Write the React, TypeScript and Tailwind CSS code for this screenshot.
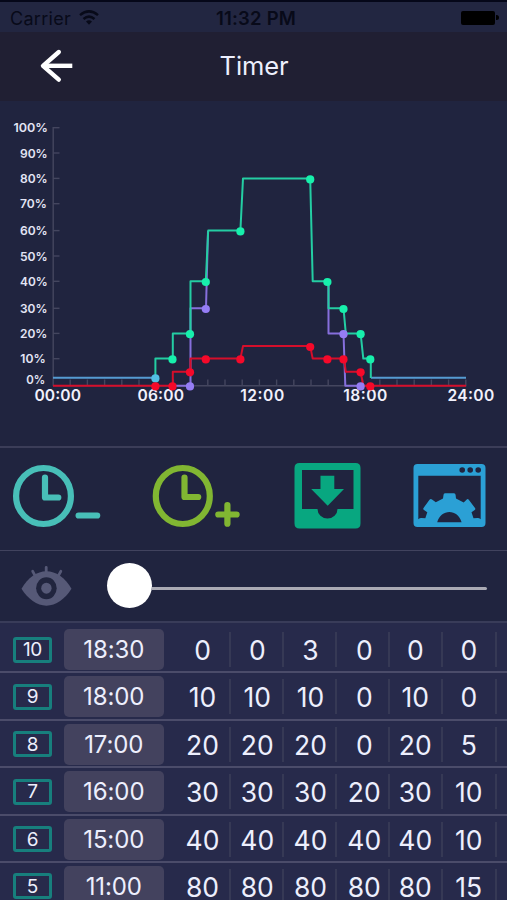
import React from "react";

const PERCENT_LABELS = [
  { text: "100%", x: 13.5, y: 127.7, width: 34.5 },
  { text: "90%", x: 20, y: 153, width: 27.7 },
  { text: "80%", x: 20, y: 178.4, width: 27.7 },
  { text: "70%", x: 20, y: 203.7, width: 26.8 },
  { text: "60%", x: 20, y: 230.6, width: 27.7 },
  { text: "50%", x: 20, y: 256, width: 27.7 },
  { text: "40%", x: 20, y: 281.3, width: 27.7 },
  { text: "30%", x: 20, y: 308.3, width: 27.4 },
  { text: "20%", x: 20, y: 333.4, width: 27.4 },
  { text: "10%", x: 20.3, y: 358.7, width: 25.4 },
  { text: "0%", x: 26.3, y: 379.3, width: 19 },
];

const HOURS = [
  { text: "00:00", x: 34.4 },
  { text: "06:00", x: 137.4 },
  { text: "12:00", x: 240.2 },
  { text: "18:00", x: 343.2 },
  { text: "24:00", x: 447.5 },
];

const GREEN_DOTS = [[172.5, 359.4], [190, 334.2], [205.8, 282], [240.4, 231.4], [310.2, 179.4], [327.4, 282], [343.5, 309], [360.6, 334.2], [370.3, 359.4]];
const PURPLE_DOTS = [[190, 386.4], [205.8, 309], [343.5, 334.2], [360.6, 386.4]];
const RED_DOTS = [[155.4, 386.4], [172.5, 386.4], [190, 372.3], [205.8, 359.4], [240.4, 359.4], [310.2, 347], [327.4, 359.4], [343.5, 359.4], [360.6, 372.3], [370.3, 386.4]];

const ROWS = [
  { id: 10, time: "18:30", values: [0, 0, 3, 0, 0, 0] },
  { id: 9, time: "18:00", values: [10, 10, 10, 0, 10, 0] },
  { id: 8, time: "17:00", values: [20, 20, 20, 0, 20, 5] },
  { id: 7, time: "16:00", values: [30, 30, 30, 20, 30, 10] },
  { id: 6, time: "15:00", values: [40, 40, 40, 40, 40, 10] },
  { id: 5, time: "11:00", values: [80, 80, 80, 80, 80, 15] },
];

function Dots({ points, color }: { points: number[][]; color: string }) {
  return (
    <g fill={color}>
      {points.map(([x, y]) => (
        <circle key={`${x}-${y}`} cx={x} cy={y} r="4.1" />
      ))}
    </g>
  );
}

function Chart() {
  return (
    <svg width="507" height="345" viewBox="0 101 507 345" className="block shrink-0">
      <g stroke="#44465f" strokeWidth="1.4">
        <path d="M53.2 127v259M53 385.8H466.500" />
        {PERCENT_LABELS.slice(0, 10).map((l) => (
          <path key={l.text} d={`M53 ${l.y}h6.500`} />
        ))}
        {Array.from({ length: 24 }, (_, i) => (
          <path key={i} d={`M${53 + (i + 1) * 17.2} 379.500v6`} />
        ))}
      </g>
      <g fill="#e3e4f5" fontSize="12.4" fontWeight="600">
        {PERCENT_LABELS.map((l) => (
          <text key={l.text} x={l.x} y={l.y + 4.5} textLength={l.width} lengthAdjust="spacingAndGlyphs">
            {l.text}
          </text>
        ))}
      </g>
      <g fill="#f1f1fc" fontSize="15.6" fontWeight="600">
        {HOURS.map((h) => (
          <text key={h.text} x={h.x} y="401" textLength={h.text[0] === "1" ? 44 : 46.7}>
            {h.text}
          </text>
        ))}
      </g>
      <g fill="none" strokeWidth="2" strokeLinejoin="round">
        <path stroke="#866fdc" d="M172.500 385.700H190.500V308.300H206L208 231M328.500 282V333.500H343.500L345.300 385.700H360.600" />
        <path stroke="#559bd2" d="M53 377.800H155.400M371 377.800H466" />
        <path stroke="#24cda3" d="M155.400 378V358.600H172.800V333.400H190.500V281.300H205.800L208.200 230.600H240.400L243 178.400H310.200L312.700 281.300H328.500V308.300H343.500L345.800 333.400H360.600L363.300 358.600H370.800V378" />
        <path stroke="#d50e2b" d="M53 385.800H172.800V371.800H190.500V358.600H240.400L243 346.100H310.200L312.700 358.600H344L345.800 371.800H360.600L363.300 385.800H466" />
      </g>
      <Dots points={PURPLE_DOTS} color="#957df5" />
      <Dots points={GREEN_DOTS} color="#17f0ac" />
      <Dots points={[[155.4, 378.4]]} color="#52c0e5" />
      <Dots points={RED_DOTS} color="#f5092a" />
    </svg>
  );
}

function Toolbar() {
  return (
    <div className="flex h-[102px] shrink-0 items-start">
      <svg width="127" height="102" viewBox="0 448 127 102" fill="none" stroke="#48bfb8" strokeWidth="6.2" strokeLinecap="round" strokeLinejoin="round">
        <ellipse cx="43.500" cy="496" rx="27.400" ry="28" />
        <path d="M45 477.500V497.500H58.300M78.600 515.500H97.200" />
      </svg>
      <svg width="127" height="102" viewBox="127 448 127 102" fill="none" stroke="#81b632" strokeWidth="6.2" strokeLinecap="round" strokeLinejoin="round">
        <ellipse cx="182.800" cy="496" rx="27" ry="28" />
        <path d="M184.500 477.500V497H198.200M218.300 514.500H236.600M227.400 505V523.700" />
      </svg>
      <svg width="127" height="102" viewBox="254 448 127 102">
        <path fill="#08a780" fillRule="evenodd" d="M299.500 463h56q5 0 5 5v55.500q0 5-5 5h-56q-5 0-5-5V468q0-5 5-5ZM302 470v39h15.500a10 9.500 0 0 0 20 0H353.500v-39Z" />
        <path fill="#08a780" d="M320.500 475.700h13.800V489h9.700l-16.300 16.700L311.200 489h9.300Z" />
      </svg>
      <svg width="126" height="102" viewBox="381 448 126 102">
        <path fill="#2ba0d5" fillRule="evenodd" d="M417.500 464h64q4 0 4 4v55q0 4-4 4h-64q-4 0-4-4V468q0-4 4-4ZM418.300 475.700V519.300Q420 517.800 421.500 518L425.300 518.300L427.300 512.300L424 510Q422.800 509.200 423.500 508L429.500 499.800Q430.700 498.500 432 499.500L435.800 502.200L443 498.500L443.500 495Q443.500 493.300 445 493.300H454Q455.500 493.300 455.600 495L456 498.500L463.700 502.500L466.500 499.700Q467.700 498.500 468.800 499.800L475 508Q475.800 509.200 474.700 510L471.500 512.300L473.500 518.300L477.500 518Q479 517.800 480.700 519.300V475.700ZM437.200 522.200H461.600C459.500 515.500 454.800 512 449.400 512S439.300 515.500 437.200 522.200Z" />
        <g fill="#20243f">
          <circle cx="462.200" cy="470" r="2.800" />
          <circle cx="470.200" cy="470" r="2.800" />
          <circle cx="478.200" cy="470" r="2.800" />
        </g>
      </svg>
    </div>
  );
}

function SliderRow() {
  return (
    <div className="flex h-[70px] shrink-0 items-center">
      <svg width="107" height="70" viewBox="0 551 107 70" className="shrink-0">
        <path fill="#565977" d="M21.500 588.800C28 577.500 37 571.300 46.400 571.300S65 577.500 71.500 588.800C65 599 56 605.700 46.400 605.700S28 599 21.500 588.800Z" />
        <path stroke="#565977" strokeWidth="2.800" strokeLinecap="round" d="M46.200 567.300v6M32.700 571.300l3.300 6M60.800 571.300l-3.300 6" />
        <ellipse cx="46.400" cy="588.200" rx="10.300" ry="11" fill="#21253e" />
        <ellipse cx="46.400" cy="588.200" rx="5.200" ry="5.500" fill="#565977" />
      </svg>
      <div className="-mt-px size-[45px] shrink-0 rounded-full bg-white" />
      <div className="mr-5 mt-[4px] h-[3px] flex-1 rounded-r-full bg-[#aaaab4]" />
    </div>
  );
}

function ScheduleRow({ row }: { row: (typeof ROWS)[number] }) {
  return (
    <div className="flex h-[47.4px] shrink-0 items-start border-b-2 border-[#4b4c6a] pl-[13px]">
      <div className="mt-[10.500px] flex h-[26px] w-[39px] shrink-0 items-center justify-center rounded-[3px] border-[3px] border-[#177f7d] text-[19px] leading-none tracking-[-0.3px]">
        <span>{row.id}</span>
      </div>
      <div className="ml-3 mt-[3px] flex h-[41px] w-[99.500px] shrink-0 items-center justify-center rounded-[5px] bg-[#43425e] pt-px text-[24px] leading-none tracking-[-0.1px]">
        {row.time}
      </div>
      <div className="ml-[13px] mt-[6px] grid grid-cols-[54px_53.500px_53px_52.500px_53.500px_53.500px] text-[26.500px] leading-none">
        {row.values.map((value, i) => (
          <div key={i} className="flex h-[35px] items-start justify-center border-r-2 border-[#363955] pt-[5px]">
            <span className={i === 3 ? "translate-x-[2px]" : i === 1 || i === 2 ? "translate-x-px" : ""}>{value}</span>
          </div>
        ))}
      </div>
    </div>
  );
}

export default function App() {
  return (
    <div className="flex h-[900px] w-[507px] flex-col overflow-hidden bg-[#20243f] font-['Inter','Liberation_Sans',sans-serif] text-[#edeffd]">
      <div className="grid h-8 shrink-0 grid-cols-3 items-center border-t-2 border-[#050719] bg-[#222641] pl-[10px] pr-[8px] pt-[3px] leading-none text-[#080a19]">
        <div className="flex items-center gap-[8px]">
          <span className="text-[18px] tracking-[0.3px]">Carrier</span>
          <svg width="20" height="15" viewBox="0 0 20 15" fill="none" stroke="#080a19" strokeWidth="2.5" className="-mt-[3px]">
            <path d="M1 5.100Q10-2.300 19 5.100M4.500 9q5.500-4.700 11 0" />
            <path d="M7 11.400q3-2.400 6 0L10 14.800Z" fill="#080a19" stroke="none" />
          </svg>
        </div>
        <span className="translate-x-[1.500px] text-center text-[18.500px] font-semibold tracking-[0.2px]">11:32 PM</span>
        <div className="-mt-[2px] flex items-center justify-end gap-px">
          <div className="h-[14px] w-[34px] rounded-[2px] bg-black" />
          <div className="h-[5px] w-[3px] rounded-r-full bg-black" />
        </div>
      </div>
      <header className="grid h-[69px] shrink-0 grid-cols-3 items-center bg-[#201f33]">
        <svg width="36" height="36" viewBox="0 0 36 36" fill="none" stroke="white" strokeWidth="4.4" strokeLinejoin="round" className="-mt-px ml-[38px]">
          <path d="M20.800 4L5 17.800L20.800 31.600" strokeLinecap="round" />
          <path d="M5 17.800H34.300" />
        </svg>
        <h1 className="-mt-px translate-x-[0.500px] text-center text-[25.500px] font-normal leading-none tracking-[-0.1px]">Timer</h1>
      </header>
      <Chart />
      <div className="h-[2px] shrink-0 bg-[#3b3d58]" />
      <Toolbar />
      <div className="h-px shrink-0 bg-[#41435e]" />
      <SliderRow />
      <div className="h-[2px] shrink-0 bg-[#393c59]" />
      <main className="flex min-h-0 flex-1 flex-col overflow-hidden bg-[#272a4b] pt-[3px]">
        {ROWS.map((row) => (
          <ScheduleRow key={row.id} row={row} />
        ))}
      </main>
    </div>
  );
}
